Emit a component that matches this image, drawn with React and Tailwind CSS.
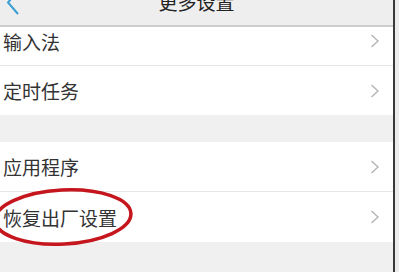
const font = { fontFamily: '"Noto Sans CJK SC", "Noto Sans", sans-serif' };

function Row({ label, className = "", children }) {
  return (
    <div className={`relative flex items-center justify-between bg-white pl-[3px] pr-[13px] ${className}`}>
      <span className="text-[19px] leading-none text-[#333333]">{label}</span>
      <svg width="10" height="14" viewBox="0 0 10 14" fill="none">
        <path d="M1.5 1 L8 7 L1.5 13" stroke="#b4b4b4" strokeWidth="1.4" />
      </svg>
      {children}
    </div>
  );
}

export default function App() {
  return (
    <div className="flex h-[272px] w-[399px] overflow-hidden bg-[#f0f0f0]" style={font}>
      <div className="flex flex-1 flex-col">
        {/* header is scrolled partly out of view in the shot */}
        <div className="relative -mt-[22px] flex h-[49px] shrink-0 items-center justify-center border-b-2 border-[#cdcdcd] bg-[#eeeeee]">
          <svg className="absolute left-[4px] top-[11px]" width="16" height="26" viewBox="0 0 16 26" fill="none">
            <path d="M14 2 L4 13.5 L14 25" stroke="#3b9fd2" strokeWidth="2" />
          </svg>
          <span className="text-[19px] leading-none text-[#222222]">更多设置</span>
        </div>

        <Row label="输入法" className="h-[38px] pb-[10px]" />
        <div className="h-px bg-[#e6e6e6]" />
        <Row label="定时任务" className="h-[49px]" />

        <div className="h-[27px]" />

        <Row label="应用程序" className="h-[49px]" />
        <div className="h-px bg-[#e6e6e6]" />
        <Row label="恢复出厂设置" className="h-[50px]">
          <svg
            className="pointer-events-none absolute left-0 top-[-6px] overflow-visible"
            width="140"
            height="62"
            viewBox="0 0 140 62"
            fill="none"
          >
            <ellipse
              cx="63"
              cy="31"
              rx="68"
              ry="27"
              stroke="#c4161c"
              strokeWidth="3.5"
              transform="rotate(-3 63 31)"
            />
          </svg>
        </Row>
      </div>
      <div className="w-[2px] bg-[#3a3a3a]" />
      <div className="w-[4px] bg-[#ececec]" />
    </div>
  );
}
